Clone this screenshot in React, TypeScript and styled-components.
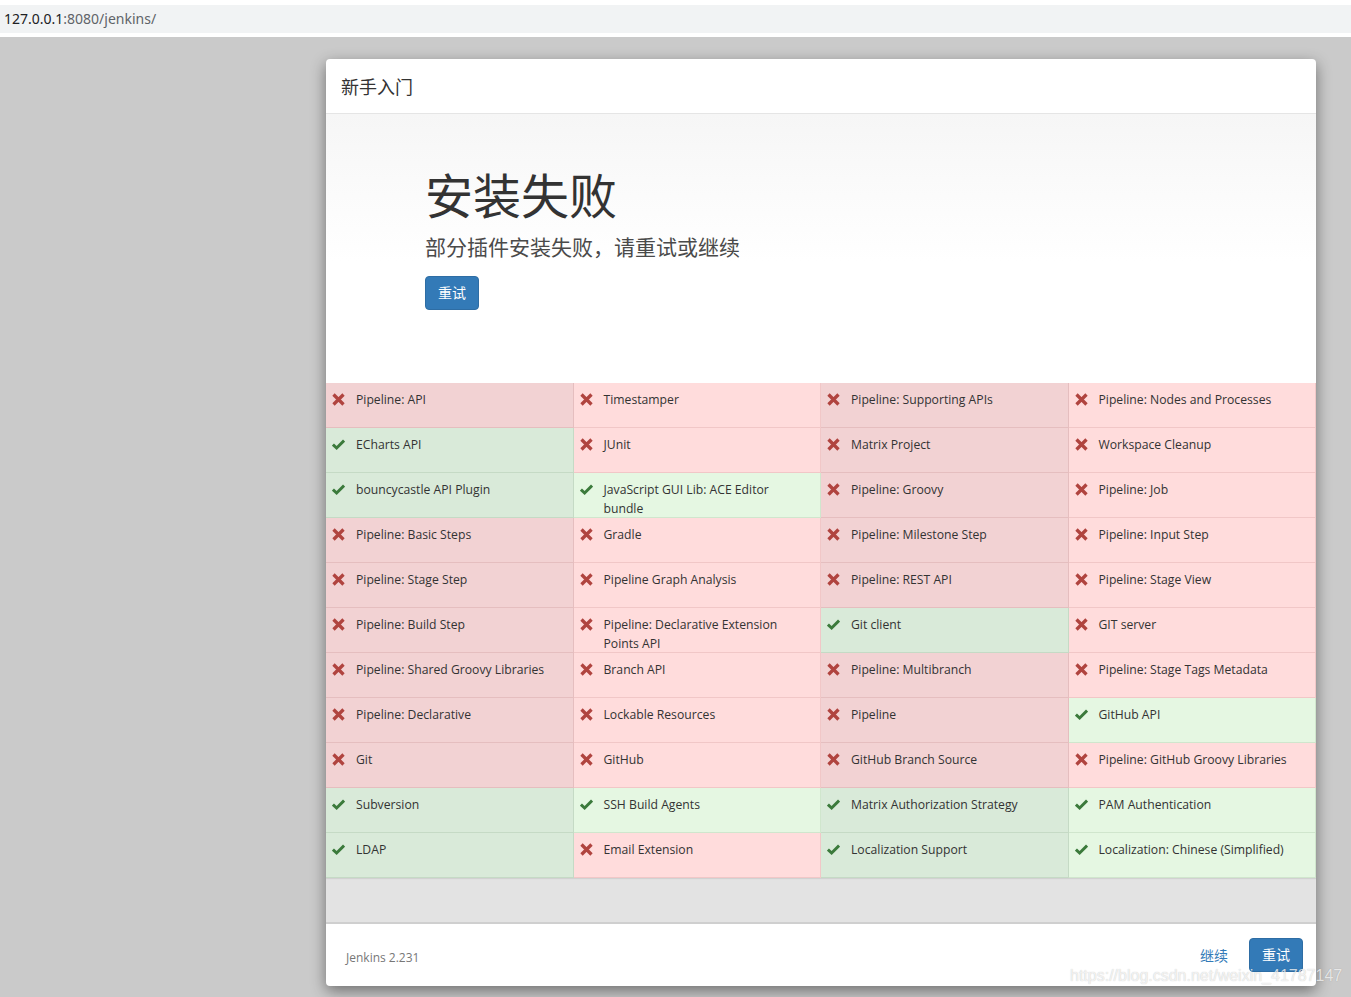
import React from "react";
import styled, { createGlobalStyle } from "styled-components";

const GlobalStyle = createGlobalStyle`
  html, body { margin: 0; padding: 0; }
  body {
    font-family: "Open Sans", "Noto Sans", "Noto Sans CJK SC", sans-serif;
    color: #333;
    background: #cacaca;
    overflow: hidden;
  }
  * { box-sizing: border-box; }
`;

const CJK = `"Noto Sans", "Noto Sans CJK SC", sans-serif`;

const Page = styled.div`
  position: relative;
  width: 1351px;
  height: 997px;
  overflow: hidden;
`;

const BrowserBar = styled.div`
  height: 37px;
  background: #fff;
  padding-top: 5px;
`;

const AddressBar = styled.div`
  height: 28px;
  background: #f1f3f4;
  display: flex;
  align-items: center;
  padding: 0 0 1px 4px;
  font-family: "Noto Sans", sans-serif;
  font-size: 14px;
`;

const Host = styled.span`
  color: #202124;
`;

const UrlPath = styled.span`
  color: #5f6368;
`;

const Overlay = styled.div`
  height: 960px;
  background: #cacaca;
  padding: 22px 0 0 326px;
`;

const Modal = styled.div`
  width: 990px;
  background: #fff;
  border-radius: 4px;
  box-shadow: 0 5px 15px rgba(0, 0, 0, 0.45);
  display: flex;
  flex-direction: column;
  overflow: hidden;
`;

const ModalHeader = styled.div`
  height: 55px;
  border-bottom: 1px solid #e5e5e5;
  display: flex;
  align-items: center;
  padding: 0 15px;
  font-family: ${CJK};
  font-size: 18px;
  color: #333;
`;

const Hero = styled.div`
  height: 269px;
  padding: 54px 0 0 99px;
  background: linear-gradient(to bottom, #f6f6f6 0%, #ffffff 55%);
`;

const Title = styled.h1`
  margin: 0;
  font-family: ${CJK};
  font-size: 48px;
  line-height: 56px;
  font-weight: 400;
  color: #333;
`;

const Subtitle = styled.p`
  margin: 8px 0 0;
  font-family: ${CJK};
  font-size: 21px;
  line-height: 30px;
  color: #4a4a4a;
`;

const PrimaryButton = styled.button<{ $mt?: number }>`
  margin-top: ${(p) => p.$mt ?? 0}px;
  height: 34px;
  padding: 0 12px;
  border: 1px solid #2e6da4;
  border-radius: 4px;
  background: #337ab7;
  color: #fff;
  font-family: ${CJK};
  font-size: 14px;
  line-height: 20px;
  cursor: pointer;
`;

const Grid = styled.div`
  display: grid;
  grid-template-columns: repeat(4, 1fr);
  grid-auto-rows: 45px;
  box-shadow: 0 1px 1px rgba(0, 0, 0, 0.08);
  position: relative;
`;

const palette = {
  fail: ["#f2d2d3", "#ffdcdc"],
  ok: ["#d9ead9", "#e5f7e2"],
};

const Cell = styled.div<{ $ok: boolean; $odd: boolean }>`
  display: flex;
  align-items: flex-start;
  padding: 7px 18px 0 6px;
  background: ${(p) => palette[p.$ok ? "ok" : "fail"][p.$odd ? 0 : 1]};
  border-right: 1px solid ${(p) => (p.$ok ? "rgba(60,110,60,0.12)" : "rgba(150,60,60,0.13)")};
  border-bottom: 1px solid ${(p) => (p.$ok ? "rgba(60,110,60,0.12)" : "rgba(150,60,60,0.13)")};
  font-family: "Open Sans", sans-serif;
  font-size: 12.2px;
  line-height: 19px;
  color: #333;
  overflow: hidden;
`;

const IconBox = styled.span`
  flex: none;
  width: 13px;
  height: 13px;
  margin: 3px 11px 0 0;
  display: flex;
`;

const Label = styled.span`
  flex: 1;
  min-width: 0;
`;

const Spacer = styled.div`
  height: 46px;
  background: #e3e3e3;
  border-bottom: 2px solid #cfcfcf;
`;

const Footer = styled.div`
  height: 62px;
  display: flex;
  align-items: center;
  padding: 0 13px 0 20px;
  gap: 21px;
`;

const Version = styled.span`
  flex: 1;
  font-family: "Open Sans", sans-serif;
  font-size: 12px;
  color: #777;
  padding-top: 4px;
`;

const LinkButton = styled.button`
  border: none;
  background: none;
  padding: 0;
  color: #337ab7;
  font-family: ${CJK};
  font-size: 14px;
  cursor: pointer;
`;

const Watermark = styled.div`
  position: absolute;
  left: 1070px;
  top: 967px;
  font-family: "Liberation Sans", Arial, sans-serif;
  font-size: 16px;
  line-height: 18px;
  color: rgba(255, 255, 255, 0.75);
  text-shadow: 0 0 1px rgba(0, 0, 0, 0.25);
  pointer-events: none;
`;

const FailIcon = () => (
  <svg width="13" height="13" viewBox="0 0 13 13">
    <path d="M1.5 1.5 L11.5 11.5 M11.5 1.5 L1.5 11.5" stroke="#b0443f" strokeWidth="3.3" strokeLinecap="butt" fill="none" />
  </svg>
);

const OkIcon = () => (
  <svg width="14" height="13" viewBox="0 0 14 13">
    <path d="M1 6.5 L5 10.3 L13 2.3" stroke="#3b7a3b" strokeWidth="3.2" strokeLinejoin="miter" fill="none" />
  </svg>
);

type Plugin = [string, boolean];

const plugins: Plugin[] = [
  ["Pipeline: API", false],
  ["Timestamper", false],
  ["Pipeline: Supporting APIs", false],
  ["Pipeline: Nodes and Processes", false],
  ["ECharts API", true],
  ["JUnit", false],
  ["Matrix Project", false],
  ["Workspace Cleanup", false],
  ["bouncycastle API Plugin", true],
  ["JavaScript GUI Lib: ACE Editor bundle", true],
  ["Pipeline: Groovy", false],
  ["Pipeline: Job", false],
  ["Pipeline: Basic Steps", false],
  ["Gradle", false],
  ["Pipeline: Milestone Step", false],
  ["Pipeline: Input Step", false],
  ["Pipeline: Stage Step", false],
  ["Pipeline Graph Analysis", false],
  ["Pipeline: REST API", false],
  ["Pipeline: Stage View", false],
  ["Pipeline: Build Step", false],
  ["Pipeline: Declarative Extension Points API", false],
  ["Git client", true],
  ["GIT server", false],
  ["Pipeline: Shared Groovy Libraries", false],
  ["Branch API", false],
  ["Pipeline: Multibranch", false],
  ["Pipeline: Stage Tags Metadata", false],
  ["Pipeline: Declarative", false],
  ["Lockable Resources", false],
  ["Pipeline", false],
  ["GitHub API", true],
  ["Git", false],
  ["GitHub", false],
  ["GitHub Branch Source", false],
  ["Pipeline: GitHub Groovy Libraries", false],
  ["Subversion", true],
  ["SSH Build Agents", true],
  ["Matrix Authorization Strategy", true],
  ["PAM Authentication", true],
  ["LDAP", true],
  ["Email Extension", false],
  ["Localization Support", true],
  ["Localization: Chinese (Simplified)", true],
];

export default function App() {
  return (
    <Page>
      <GlobalStyle />
      <BrowserBar>
        <AddressBar>
          <Host>127.0.0.1</Host>
          <UrlPath>:8080/jenkins/</UrlPath>
        </AddressBar>
      </BrowserBar>
      <Overlay>
        <Modal>
          <ModalHeader>新手入门</ModalHeader>
          <Hero>
            <Title>安装失败</Title>
            <Subtitle>部分插件安装失败，请重试或继续</Subtitle>
            <PrimaryButton $mt={14}>重试</PrimaryButton>
          </Hero>
          <Grid>
            {plugins.map(([name, ok], i) => (
              <Cell key={name} $ok={ok} $odd={i % 2 === 0}>
                <IconBox>{ok ? <OkIcon /> : <FailIcon />}</IconBox>
                <Label>{name}</Label>
              </Cell>
            ))}
          </Grid>
          <Spacer />
          <Footer>
            <Version>Jenkins 2.231</Version>
            <LinkButton>继续</LinkButton>
            <PrimaryButton>重试</PrimaryButton>
          </Footer>
        </Modal>
      </Overlay>
      <Watermark>https://blog.csdn.net/weixin_41787147</Watermark>
    </Page>
  );
}
